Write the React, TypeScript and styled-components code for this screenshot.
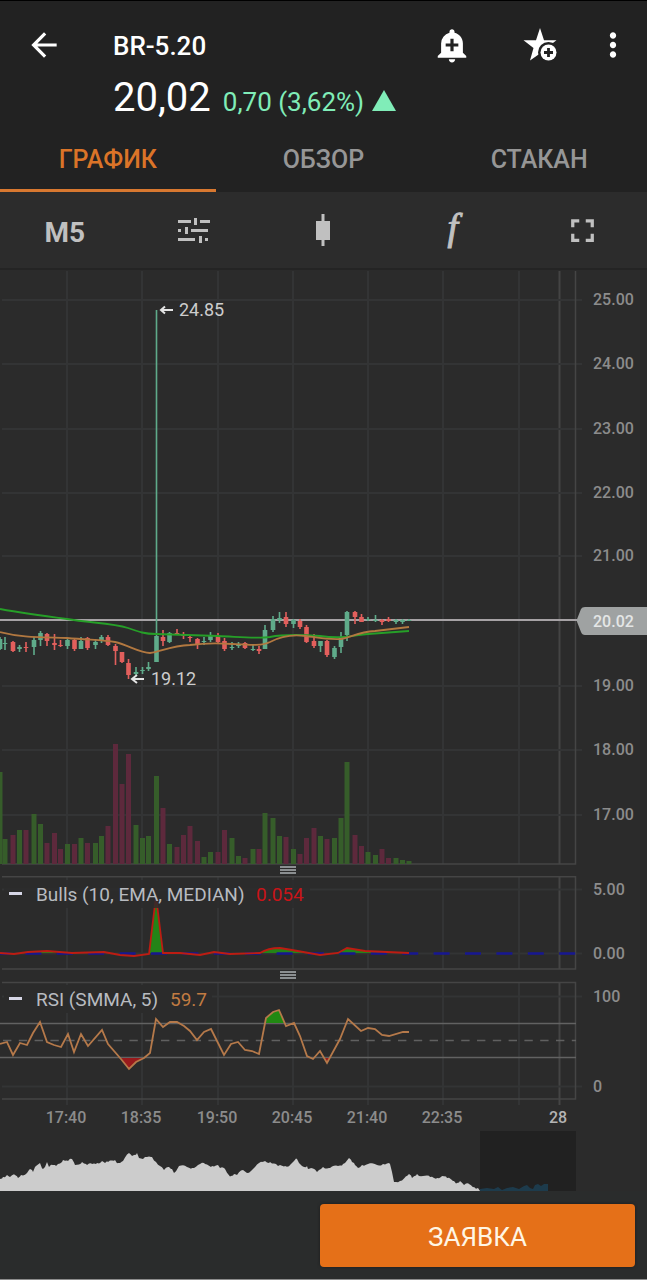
import React from "react";
import styled, { createGlobalStyle } from "styled-components";
import { MdAddAlert, MdArrowBack, MdFullscreen, MdMoreVert } from "react-icons/md";

const GlobalStyle = createGlobalStyle`
  *, *::before, *::after { box-sizing: border-box; }
  body {
    margin: 0;
    background: #2b2b2b;
    color: #fff;
    font-family: Roboto, "Liberation Sans", sans-serif;
  }
  button { font: inherit; color: inherit; background: none; border: 0; padding: 0; cursor: pointer; }
`;

const Page = styled.div`
  display: flex;
  flex-direction: column;
  min-height: 100vh;
`;

const Header = styled.header`
  background: #222;
  border-top: 1px solid #000;
`;

const TitleRow = styled.div`
  display: flex;
  align-items: center;
  height: 72px;
  padding: 16px 5px 0 24px;
`;

const IconButton = styled.button<{ $width: number }>`
  display: flex;
  align-items: center;
  justify-content: center;
  width: ${(p) => p.$width}px;
  height: 48px;
`;

const Title = styled.h1`
  flex: 1;
  margin: 0 0 0 49px;
  padding-top: 2px;
  font-size: 26px;
  line-height: 32px;
  font-weight: 500;
`;

const PriceRow = styled.div`
  display: flex;
  align-items: baseline;
  gap: 12px;
  height: 54px;
  padding-left: 113px;
  line-height: 50px;
`;

const Price = styled.span`
  font-size: 40px;
`;

const Change = styled.span`
  display: flex;
  align-items: baseline;
  gap: 8px;
  font-size: 26px;
  color: #80edb8;
`;

const Tabs = styled.nav`
  display: grid;
  grid-template-columns: repeat(3, 1fr);
`;

const Tab = styled.button<{ $active?: boolean }>`
  height: 65px;
  padding-top: 2px;
  border-bottom: 3px solid ${(p) => (p.$active ? "#d87830" : "transparent")};
  color: ${(p) => (p.$active ? "#db7428" : "#969696")};
  font-size: 25px;
  font-weight: 500;
`;

const Toolbar = styled.div`
  display: grid;
  grid-template-columns: repeat(5, 1fr);
  height: 78px;
  background: #2c2c2c;
  border-bottom: 2px solid #242424;
`;

const Tool = styled.button`
  display: flex;
  align-items: center;
  justify-content: center;
  color: #c0c0c0;
  font-size: 28px;
  font-weight: 700;
`;

const Timeframe = styled.span`
  padding-top: 4px;
`;

const FunctionMark = styled.span`
  padding-bottom: 6px;
  font: italic 38px "Liberation Serif", serif;
  -webkit-text-stroke: 1px currentColor;
`;

const Chart = styled.main`
  display: flex;
  flex-direction: column;
`;

const Pane = styled.svg`
  display: block;
  width: 100%;
  height: auto;
  font-size: 16px;
  fill: #8c8c8c;
`;

const HandleRow = styled.div`
  display: flex;
  justify-content: center;
  align-items: flex-start;
  height: 11px;
  padding: 1px 11% 0 0;
`;

const Handle = styled.button`
  width: 16px;
  height: 8px;
  background: repeating-linear-gradient(#8b8f91 0 2px, #2b2b2b 2px 3px);
`;

const Footer = styled.footer`
  display: flex;
  flex: 1;
  align-items: flex-start;
  justify-content: flex-end;
  padding: 13px 12px 12px;
  background: #2a2c2c;
  border-bottom: 1px solid #8c8c8c;
`;

const OrderButton = styled.button`
  width: 50%;
  min-width: 315px;
  height: 63px;
  padding-top: 2px;
  border-radius: 4px;
  background: #e57018;
  color: #fff6e4;
  font-size: 26px;
  box-shadow: 0 0 3px #1c1c1c;
`;

const TIMES: [number, string][] = [
  [67, "17:40"], [142, "18:35"], [218, "19:50"], [293, "20:45"], [368, "21:40"], [443, "22:35"],
];
const PRICES: [number, string][] = [
  [300, "25.00"], [364, "24.00"], [429, "23.00"], [493, "22.00"], [556, "21.00"],
  [686, "19.00"], [750, "18.00"], [815, "17.00"],
];

const UP = "#5fab8a";
const DOWN = "#e25f5c";

// x, rising, volume, high, body top, body bottom, low
type Bar = [number, 0 | 1, number, number, number, number, number];
const BARS: Bar[] = [
  [0, 1, 92, 637, 639, 649, 650], [5, 1, 25, 637, 643, 644, 650], [13, 0, 29, 641, 642, 651, 652],
  [19.5, 1, 34, 645, 647, 649, 652], [26, 0, 34, 642, 647, 648, 652], [34, 1, 50, 637, 640, 647, 655],
  [40.5, 1, 40, 631, 633, 640, 646], [47, 0, 21, 633, 634, 641, 646], [54.5, 0, 31, 634, 643, 645, 650],
  [60.5, 0, 15, 640, 645, 646, 647], [67.5, 1, 20, 638, 640, 646, 649], [74.5, 0, 20, 639, 640, 649, 651],
  [81, 1, 26, 637, 641, 649, 649], [87.5, 0, 21, 637, 638, 648, 650], [95.5, 1, 21, 639, 642, 645, 649],
  [101.5, 1, 28, 635, 637, 640, 643], [108, 0, 38, 635, 637, 645, 646], [115.5, 0, 120, 644, 646, 651, 665],
  [122, 0, 80, 652, 652, 662, 663], [128.5, 0, 110, 659, 663, 675, 679], [136, 1, 39, 667, 672, 674, 675],
  [142.5, 1, 26, 667, 670, 671, 674], [148.5, 1, 28, 662, 667, 669, 671], [156.5, 1, 88, 310, 636, 662, 662],
  [163, 0, 56, 630, 637, 641, 646], [169.5, 1, 20, 632, 633, 642, 643], [177, 0, 17, 629, 633, 635, 635],
  [183.5, 0, 29, 632, 635, 636, 639], [190, 0, 38, 635, 637, 638, 642], [197.5, 0, 23, 638, 639, 645, 649],
  [204, 1, 7, 637, 641, 642, 645], [210.5, 1, 12, 632, 636, 640, 642], [218, 0, 12, 633, 636, 642, 643],
  [224.5, 0, 34, 638, 641, 649, 651], [232, 1, 26, 642, 647, 648, 650], [238.5, 1, 8, 642, 644, 646, 648],
  [245, 0, 6, 642, 643, 648, 649], [253, 1, 15, 645, 649, 650, 651], [259, 0, 15, 646, 649, 651, 654],
  [265, 1, 51, 625, 630, 649, 649], [273, 1, 46, 616, 619, 630, 632], [279.5, 1, 28, 612, 618, 620, 623],
  [286, 0, 27, 612, 617, 624, 627], [293.5, 1, 15, 619, 620, 624, 628], [300, 0, 10, 619, 621, 627, 629],
  [306.5, 0, 26, 625, 627, 642, 643], [314, 0, 36, 634, 641, 646, 648], [320.5, 1, 28, 641, 641, 646, 652],
  [327, 0, 25, 640, 641, 655, 657], [334.5, 1, 26, 646, 648, 657, 659], [341, 1, 46, 632, 637, 647, 653],
  [347, 1, 102, 611, 612, 635, 641], [355, 0, 29, 611, 612, 617, 624], [361.5, 0, 18, 614, 617, 622, 622],
  [368, 1, 12, 617, 619, 620, 621], [375.5, 1, 9, 615, 620, 621, 622], [382, 0, 15, 619, 620, 622, 625],
  [388.5, 0, 6, 617, 619, 621, 622], [396, 1, 6, 619, 620, 622, 624], [402.5, 1, 4, 619, 620, 622, 624],
  [409, 1, 3, 619, 620, 621, 621],
];

const RSI =
  "0,1044 7,1042 13,1055 20,1043 27,1045 33,1033 40,1022 47,1042 54,1045 61,1047 68,1034 74,1052 81,1034 88,1046 102,1030 108,1044 121,1059 129,1069 136,1062 144,1058 150,1053 156,1019 163,1027 170,1022 177,1022 184,1026 190,1031 197,1040 204,1032 211,1029 224,1055 231,1044 238,1042 245,1050 252,1051 259,1054 266,1018 273,1012 279,1010 286,1026 294,1023 300,1036 307,1056 313,1059 320,1051 327,1063 340,1039 348,1019 361,1031 368,1028 375,1029 382,1035 389,1036 403,1032 409,1032";

const HISTORY =
  "0,1179 3,1177 7,1175 10,1177 15,1175 18,1178 21,1175 27,1173 30,1169 33,1172 36,1166 40,1163 43,1169 45,1167 47,1162 49,1167 53,1165 56,1166 58,1164 63,1160 68,1161 72,1159 75,1165 82,1162 87,1165 92,1164 97,1163 102,1161 105,1163 108,1162 115,1160 118,1163 123,1161 129,1153 132,1156 134,1155 137,1153 139,1158 143,1159 147,1157 152,1157 156,1162 160,1166 164,1170 169,1167 172,1169 174,1173 179,1166 187,1167 192,1168 200,1164 205,1164 212,1166 218,1165 220,1168 225,1169 228,1174 231,1176 234,1174 237,1175 243,1170 247,1173 255,1167 262,1162 265,1161 270,1162 278,1166 285,1166 290,1165 294,1161 297,1159 299,1163 302,1166 307,1166 308,1169 311,1168 317,1172 323,1167 330,1168 338,1166 343,1164 349,1158 352,1162 355,1165 358,1168 362,1165 368,1164 377,1165 383,1164 390,1164 392,1172 394,1182 400,1181 407,1176 409,1174 412,1178 417,1174 423,1176 430,1177 437,1178 442,1176 447,1178 454,1181 457,1183 460,1181 464,1185 469,1184 474,1187 478,1188 480,1190";

function historyOutline() {
  const keys = HISTORY.split(" ").map((p) => p.split(",").map(Number));
  const out: string[] = ["0,1191"];
  for (let i = 0; i < keys.length - 1; i++) {
    const [x0, y0] = keys[i];
    const [x1, y1] = keys[i + 1];
    out.push(`${x0},${y0}`);
    for (let x = x0 + 2; x < x1; x += 2) {
      const y = y0 + ((y1 - y0) * (x - x0)) / (x1 - x0);
      out.push(`${x},${(y + Math.sin(x * 12.9) * 1.2).toFixed(1)}`);
    }
  }
  out.push("480,1191");
  return out.join(" ");
}

function VerticalGrid({ top, bottom }: { top: number; bottom: number }) {
  return (
    <g strokeWidth="2">
      {[67, 142, 218, 293, 368, 443, 519].map((x) => (
        <line key={x} x1={x} x2={x} y1={top} y2={bottom} stroke="#333435" />
      ))}
      <line x1="559.5" x2="559.5" y1={top} y2={bottom} stroke="#444" />
    </g>
  );
}

function PricePane() {
  return (
    <Pane viewBox="0 270 647 595" role="img" aria-label="Цена и объём">
      <VerticalGrid top={271} bottom={864} />
      {PRICES.map(([y, label]) => (
        <g key={label}>
          <line x1="2" x2="582" y1={y} y2={y} stroke="#333435" strokeWidth="2" />
          <text x="593" y={y + 5} fontWeight="500">{label}</text>
        </g>
      ))}
      <path d="M2 864H575.500V271" fill="none" stroke="#454545" strokeWidth="1.5" />
      {BARS.map(([x, up, volume]) => (
        <rect key={x} x={x - 2.5} y={864 - volume} width="5" height={volume} fill={up ? "#365d2a" : "#5d293c"} />
      ))}
      <path d="M0 620H577" stroke="#a6a2a5" strokeWidth="2" />
      {BARS.map(([x, up, , high, top, bottom, low]) => (
        <g key={x} fill={up ? UP : DOWN}>
          <rect x={x - 0.8} y={high} width="1.6" height={low - high} />
          <rect x={x - 2.3} y={top} width="4.6" height={bottom - top} />
        </g>
      ))}
      <path
        d="M0 609C22 613 44 616 67 619C90 623 112 623 128 628C139 632 145 634 156 634L218 636C240 637 256 639 270 637C285 634 306 635 320 636C342 639 350 636 368 634L409 631"
        fill="none" stroke="#269f28" strokeWidth="1.8"
      />
      <path
        d="M0 632C20 637 30 637 67 638C90 640 104 640 115 642C128 645 140 653 150 653C160 652 170 646 190 645C205 643 218 643 232 644C250 645 262 646 270 642C281 636 292 634 306 636C320 638 330 640 341 639C352 637 358 632 375 631L409 627"
        fill="none" stroke="#b27840" strokeWidth="1.8"
      />
      <g fill="none" stroke="#e4e4e4" strokeWidth="2">
        <path d="M173 310H161M165 306.500L161 310L165 313.500" />
        <path d="M144 679H132M137 675L132 679L137 683" />
      </g>
      <g fill="#cdcdcd" fontSize="18">
        <text x="179" y="316">24.85</text>
        <text x="151" y="685">19.12</text>
      </g>
      <path d="M576.500 620.500L581 609Q582 607 585 607H647V635H585Q582 635 581 632Z" fill="#9fa2a2" />
      <text x="593" y="627" fill="#e4e6e6" fontWeight="500">20.02</text>
    </Pane>
  );
}

function BullsPane() {
  return (
    <Pane viewBox="0 876 647 94" role="img" aria-label="Bulls">
      <VerticalGrid top={877} bottom={969} />
      <path d="M2 889.500H582M2 953.500H582" stroke="#333435" strokeWidth="2" />
      <path d="M2 876.750H575.500V969H2" fill="none" stroke="#454545" strokeWidth="1.5" />
      <path
        d="M28 953L47 951L57 953ZM149 953L156 896L163 953ZM260 953L269 949L280 948L292 950L310 953ZM338 953L347 948L360 950L385 953Z"
        fill="#238417"
      />
      <path d="M-6 953.500H576" stroke="#171791" strokeWidth="2.5" strokeDasharray="16 15.4" />
      <path
        d="M0 953L14 954L28 952L47 951L72 953L104 952L120 955L134 956L149 954L156 896L163 953L180 953L200 955L214 952L230 954L260 953Q268 948 280 948L292 950L320 955L338 953L347 948L365 951L409 953"
        fill="none" stroke="#bd1c12" strokeWidth="1.8"
      />
      <rect x="4" y="880" width="306" height="28" fill="#2b2b2b" opacity=".85" />
      <rect x="9" y="892" width="13" height="3" fill="#d6d6e6" />
      <g fontSize="19">
        <text x="36" y="901" fill="#b8bbc0">Bulls (10, EMA, MEDIAN)</text>
        <text x="256" y="901" fill="#c91418">0.054</text>
      </g>
      <g fontWeight="500">
        <text x="593" y="895">5.00</text>
        <text x="593" y="959">0.00</text>
      </g>
    </Pane>
  );
}

function RsiPane() {
  return (
    <Pane viewBox="0 981 647 150" role="img" aria-label="RSI">
      <VerticalGrid top={982} bottom={1105} />
      <path d="M2 996.500H582M2 1086.500H582" stroke="#333435" strokeWidth="2" />
      <path d="M2 982.500H575.500V1099H2" fill="none" stroke="#454545" strokeWidth="1.5" />
      <path d="M0 1023.500H576M0 1057.500H576" stroke="#626262" strokeWidth="1.5" />
      <path d="M3 1040.500H576" stroke="#606060" strokeWidth="1.5" strokeDasharray="8.4 7.4" />
      <path d="M265 1023L266 1018L273 1012L279 1010L285 1023Z" fill="#218912" />
      <path d="M121 1058L129 1069L136 1062L144 1058ZM325 1058L327 1063L330 1058Z" fill="#981a1c" />
      <polyline points={RSI} fill="none" stroke="#b5794a" strokeWidth="1.8" />
      <rect x="4" y="985" width="208" height="28" fill="#2b2b2b" />
      <rect x="9" y="997" width="13" height="3" fill="#d6d6e6" />
      <g fontSize="19">
        <text x="36" y="1006" fill="#b8bbc0">RSI (SMMA, 5)</text>
        <text x="170" y="1006" fill="#c17b42">59.7</text>
      </g>
      <g fontWeight="500">
        <text x="593" y="1002">100</text>
        <text x="593" y="1092">0</text>
      </g>
      <g textAnchor="middle" fontWeight="500">
        {TIMES.map(([x, label]) => (
          <text key={label} x={x - 1} y="1123">{label}</text>
        ))}
        <text x="558" y="1123" fill="#b4b4b4">28</text>
      </g>
    </Pane>
  );
}

function Navigator() {
  return (
    <Pane viewBox="0 1131 647 60" role="img" aria-label="История">
      <polygon points={historyOutline()} fill="#ccc" />
      <rect x="480" y="1131" width="96" height="60" fill="#212121" />
      <path
        d="M480 1191V1189L487 1188L494 1189L498 1187L502 1190L507 1188L513 1187L519 1189L524 1186L527 1185L530 1188L533 1189L535 1185L538 1184L541 1186L544 1184H548V1191Z"
        fill="#1d3b4c"
      />
    </Pane>
  );
}

const StarPlusIcon = () => (
  <svg width="36" height="36" viewBox="0 0 36 36" aria-hidden="true">
    <path d="M18 1L22 13.200H34.500L25 20.500L22 28L18 26.500L8 33.500L11.500 21L1.500 13.200H14Z" fill="#fff" />
    <circle cx="26.500" cy="25.500" r="10.500" fill="#222" />
    <circle cx="26.500" cy="25.500" r="8" fill="#fff" />
    <path d="M26.500 21V30M22 25.500H31" stroke="#222" strokeWidth="2.800" />
  </svg>
);

const SlidersIcon = () => (
  <svg width="32" height="28" viewBox="0 0 32 28" fill="currentColor" aria-hidden="true">
    <path d="M0 4h13v3H0zM16 2h3v7h-3zM22 4h10v3H22zM0 13h3v3H0zM7 11h3v7H7zM13 13h17v3H13zM0 22h17v3H0zM21 20h3v7h-3zM27 22h3v3h-3z" />
  </svg>
);

const CandleIcon = () => (
  <svg width="14" height="32" viewBox="0 0 14 32" fill="currentColor" aria-hidden="true">
    <path d="M5.500 0h3v7H14v19H8.500v6h-3v-6H0V7h5.500z" />
  </svg>
);

const RiseIcon = () => (
  <svg width="24" height="21" viewBox="0 0 24 21" fill="currentColor" aria-hidden="true">
    <path d="M12 0L24 21H0Z" />
  </svg>
);

export default function App() {
  return (
    <Page>
      <GlobalStyle />
      <Header>
        <TitleRow>
          <IconButton $width={40} aria-label="Назад"><MdArrowBack size={38} /></IconButton>
          <Title>BR-5.20</Title>
          <IconButton $width={88} aria-label="Добавить оповещение"><MdAddAlert size={38} /></IconButton>
          <IconButton $width={88} aria-label="В избранное"><StarPlusIcon /></IconButton>
          <IconButton $width={58} aria-label="Ещё"><MdMoreVert size={38} /></IconButton>
        </TitleRow>
        <PriceRow>
          <Price>20,02</Price>
          <Change>0,70 (3,62%) <RiseIcon /></Change>
        </PriceRow>
        <Tabs>
          <Tab $active>ГРАФИК</Tab>
          <Tab>ОБЗОР</Tab>
          <Tab>СТАКАН</Tab>
        </Tabs>
      </Header>
      <Toolbar>
        <Tool><Timeframe>M5</Timeframe></Tool>
        <Tool aria-label="Настройки"><SlidersIcon /></Tool>
        <Tool aria-label="Тип графика"><CandleIcon /></Tool>
        <Tool aria-label="Индикаторы"><FunctionMark>f</FunctionMark></Tool>
        <Tool aria-label="На весь экран"><MdFullscreen size={39} /></Tool>
      </Toolbar>
      <Chart>
        <PricePane />
        <HandleRow><Handle aria-label="Изменить высоту Bulls" /></HandleRow>
        <BullsPane />
        <HandleRow><Handle aria-label="Изменить высоту RSI" /></HandleRow>
        <RsiPane />
        <Navigator />
      </Chart>
      <Footer>
        <OrderButton>ЗАЯВКА</OrderButton>
      </Footer>
    </Page>
  );
}
